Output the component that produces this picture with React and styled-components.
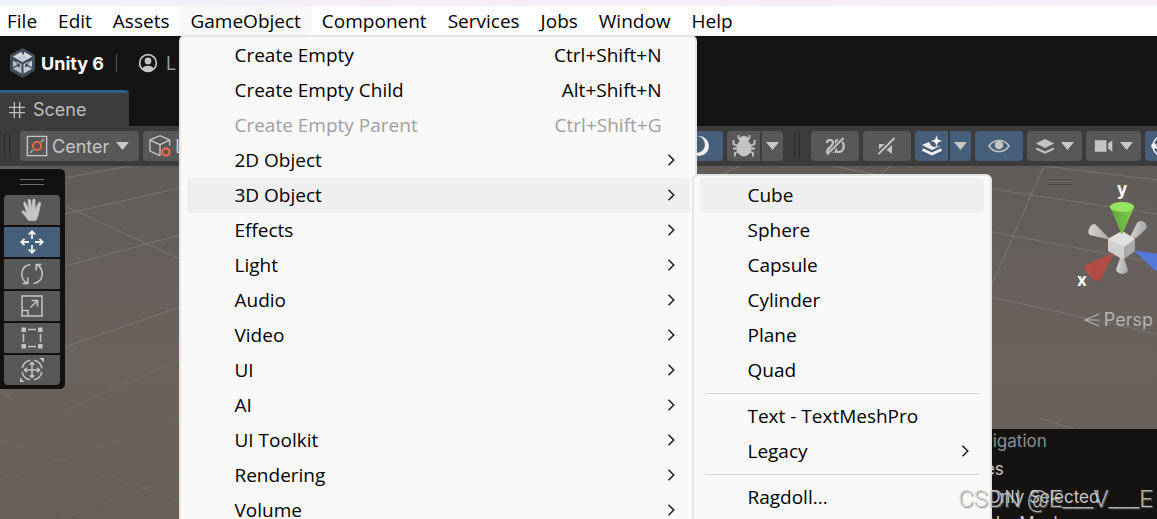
import styled, { createGlobalStyle } from "styled-components";

const GlobalStyle = createGlobalStyle`
  * {
    box-sizing: border-box;
  }
  body {
    margin: 0;
    overflow: hidden;
    background: #141414;
  }
  button {
    border: 0;
    padding: 0;
    font: inherit;
    color: inherit;
    background: none;
  }
`;

const Page = styled.div`
  position: relative;
  display: flex;
  flex-direction: column;
  height: 100vh;
  overflow: hidden;
  font-family: Inter, sans-serif;
  color: #c4c4c4;
`;

const TitleStrip = styled.div`
  flex: none;
  height: 6px;
  background: linear-gradient(90deg, #eef1fb, #f9ecf7 50%, #f6eef8);
`;

const MenuBar = styled.nav`
  display: flex;
  flex: none;
  height: 30px;
  margin-left: -3px;
  background: #fff;
  border-bottom: 1px solid #f0f0f0;
  font-family: "Open Sans", "Noto Sans", sans-serif;
  font-size: 19px;
  color: #000;
`;

const MenuSlot = styled.div`
  position: relative;
  display: flex;
`;

const MenuTitle = styled.button`
  padding: 0 11px 0 10px;
  white-space: nowrap;
  line-height: 28px;
  border-radius: 4px;
  background: ${(props) => (props.$open ? "#f9f9f9" : "transparent")};
`;

const Popup = styled.div`
  position: absolute;
  z-index: 10;
  top: ${(props) => (props.$sub ? "-4px" : "29px")};
  left: ${(props) => (props.$sub ? "505px" : "-1px")};
  width: ${(props) => (props.$sub ? "300px" : "518px")};
  padding: ${(props) => (props.$sub ? "2px 6px 10px" : "1px 5px 0 6px")};
  background: #f9f9f9;
  border: 2px solid #e5e5e5;
  border-radius: 6px;
`;

const PopupSlot = styled.div`
  position: relative;
`;

const PopupItem = styled.button`
  display: flex;
  align-items: center;
  width: 100%;
  height: 35px;
  padding: 0 13px 2px 47px;
  border-radius: 4px;
  white-space: nowrap;
  background: ${(props) => (props.$active ? "#efefef" : "transparent")};
  color: ${(props) => (props.disabled ? "#a0a0a0" : "#000")};
`;

const Shortcut = styled.span`
  margin-left: auto;
  padding-right: 16px;
`;

const Chevron = styled.svg`
  margin-left: auto;
`;

const Divider = styled.hr`
  height: 1px;
  margin: 5px 5px;
  border: 0;
  background: #d4d4d4;
`;

const Header = styled.header`
  display: flex;
  flex: none;
  align-items: center;
  height: 54px;
  padding: 0 9px;
  background: #141414;
`;

const Brand = styled.strong`
  margin-left: 5px;
  font-size: 18px;
  font-weight: 700;
  color: #fff;
`;

const Rule = styled.span`
  width: 1px;
  height: 18px;
  margin: 0 21px 0 12px;
  background: #555;
`;

const Account = styled.button`
  display: flex;
  align-items: center;
  gap: 8px;
  font-size: 18px;
  color: #999;

  svg {
    color: #c4c4c4;
  }
`;

const TabRow = styled.div`
  display: flex;
  flex: none;
  height: 36px;
  background: #141414;
`;

const Tab = styled.button`
  display: flex;
  align-items: center;
  gap: 8px;
  width: 129px;
  padding-left: 9px;
  border-top: 3px solid #2c5d87;
  border-radius: 0 4px 0 0;
  background: #3c3c3c;
  font-size: 18px;
  color: #bdbdbd;
`;

const Toolbar = styled.div`
  display: flex;
  flex: none;
  align-items: center;
  gap: 4px;
  height: 40px;
  padding: 0 0 0 4px;
  background: #3c3c3c;
`;

const Grip = styled.span`
  align-self: center;
  width: 6px;
  height: 24px;
  margin: ${(props) => (props.$wide ? "0 7px" : "0 6px 0 0")};
  border: solid #2a2a2a;
  border-width: 0 1px;
`;

const ToolGroup = styled.div`
  display: flex;
  gap: 4px;
  margin-left: auto;
  margin-right: -24px;
`;

const Split = styled.div`
  display: flex;
  gap: 2px;
`;

const ToolButton = styled.button`
  display: flex;
  flex: none;
  align-items: center;
  justify-content: center;
  gap: ${(props) => props.$gap || "6px"};
  width: ${(props) => props.$width}px;
  height: 30px;
  border-radius: ${(props) => props.$radius || "4px"};
  background: ${(props) => (props.$on ? "#46607c" : "#585858")};
  color: ${(props) => (props.$on ? "#f0f0f0" : "#c4c4c4")};
  font-size: 18px;
`;

const PivotButton = styled(ToolButton)`
  justify-content: flex-start;
  padding-left: 6px;

  svg:last-child {
    margin-left: 3px;
  }
`;

const Scene = styled.main`
  position: relative;
  flex: 1;
  padding-top: 3px;
  overflow: hidden;
  background: linear-gradient(#625c59, #69625d 55%, #665f5a);
`;

const Grid = styled.svg`
  position: absolute;
  inset: 0;
  width: 100%;
  height: 100%;
`;

const Palette = styled.div`
  position: relative;
  display: flex;
  flex-direction: column;
  gap: 2px;
  width: 65px;
  padding: 10px 5px 4px 4px;
  border-radius: 0 5px 5px 0;
  background: #121110;
`;

const PaletteGrip = styled.span`
  align-self: center;
  width: 24px;
  height: 6px;
  margin-bottom: 8px;
  border: solid #6c6c6c;
  border-width: 1px 0;
`;

const Gizmo = styled.svg`
  position: absolute;
  top: 0;
  right: 0;
`;

const Perspective = styled.button`
  position: absolute;
  top: 143px;
  right: 4px;
  display: flex;
  align-items: center;
  gap: 4px;
  font-size: 18px;
  color: #b5b2b0;
`;

const NavPanel = styled.section`
  position: absolute;
  top: 263px;
  right: 0;
  bottom: 0;
  width: 225px;
  background: #141311;
  font-size: 17px;
  white-space: nowrap;
`;

const NavTitle = styled.div`
  padding-left: 8px;
  line-height: 25px;
  color: #8f8f8f;
`;

const NavRow = styled.div`
  padding-left: ${(props) => (props.$child ? "6px" : "0")};
  line-height: ${(props) => (props.$child ? "26px" : "30px")};
  color: #c8c8c8;
`;

const Watermark = styled.div`
  position: absolute;
  z-index: 20;
  right: 4px;
  bottom: 6px;
  font-family: Roboto, sans-serif;
  font-size: 24px;
  font-weight: 300;
  line-height: 28px;
  color: #d0d0d0;
  opacity: 0.85;
  text-shadow: 1px 1px 1px #777;
`;

const MENUS = ["File", "Edit", "Assets", "GameObject", "Component", "Services", "Jobs", "Window", "Help"];

const GAME_OBJECT = [
  { label: "Create Empty", shortcut: "Ctrl+Shift+N" },
  { label: "Create Empty Child", shortcut: "Alt+Shift+N" },
  { label: "Create Empty Parent", shortcut: "Ctrl+Shift+G", disabled: true },
  { label: "2D Object" },
  { label: "3D Object", open: true },
  { label: "Effects" },
  { label: "Light" },
  { label: "Audio" },
  { label: "Video" },
  { label: "UI" },
  { label: "AI" },
  { label: "UI Toolkit" },
  { label: "Rendering" },
  { label: "Volume" },
];

const OBJECTS_3D = [
  { label: "Cube", active: true },
  { label: "Sphere" },
  { label: "Capsule" },
  { label: "Cylinder" },
  { label: "Plane" },
  { label: "Quad" },
  null,
  { label: "Text - TextMeshPro" },
  { label: "Legacy", more: true },
  null,
  { label: "Ragdoll..." },
];

const More = () => (
  <Chevron width="12" height="14" viewBox="0 0 12 14" fill="none" stroke="#222" strokeWidth="1.6">
    <path d="M3.5 1.8 8.7 7l-5.2 5.2" />
  </Chevron>
);

const Caret = ({ color = "#c8c8c8" }) => (
  <svg width="13" height="8" viewBox="0 0 13 8">
    <path d="M0 0h13L6.500 8z" fill={color} />
  </svg>
);

const Icon = ({ size = 24, children, ...rest }) => (
  <svg width={size} height={size} viewBox="0 0 24 24" fill="none" stroke="currentColor" strokeWidth="1.5" aria-hidden="true" {...rest}>
    {children}
  </svg>
);

const ObjectMenu = () => (
  <Popup $sub>
    {OBJECTS_3D.map((item, i) =>
      item ? (
        <PopupItem key={item.label} $active={item.active}>
          {item.label}
          {item.more && <More />}
        </PopupItem>
      ) : (
        <Divider key={i} />
      )
    )}
  </Popup>
);

const GameObjectMenu = () => (
  <Popup>
    {GAME_OBJECT.map((item) => (
      <PopupSlot key={item.label}>
        <PopupItem disabled={item.disabled} $active={item.open}>
          {item.label}
          {item.shortcut ? <Shortcut>{item.shortcut}</Shortcut> : <More />}
        </PopupItem>
        {item.open && <ObjectMenu />}
      </PopupSlot>
    ))}
  </Popup>
);

const UnityLogo = () => (
  <svg width="27" height="30" viewBox="0 0 27 30">
    <path d="M13.500 0 26 7v15.500L13.500 30 1 22.500V7z" fill="#424d59" />
    <path d="M12 4v4.500L8.200 10.700l5.300 3 5.300-3L15 8.500V4l8 4.600-4 2.300 0 0z" fill="#c3cbd6" />
    <path d="M12 4 4 8.600l9.500 5.500L23 8.600 15 4v4.400l3 1.800-4.500 2.600L9 10.200l3-1.800z" fill="#d5dbe4" />
    <path d="M4 9.600v9.600l3.800-2.200v-3.500l4.700 2.700v9.400L4 20.700l4.500-2.500 2.500 1.400v-3L4 12.600z" fill="#b4bdc9" />
    <path d="M23 9.600v9.600l-3.800-2.200v-3.500l-4.700 2.700v9.400l8.500-4.900-4.500-2.500-2.500 1.400v-3l7-4z" fill="#c3cbd6" />
  </svg>
);

const HandIcon = () => (
  <Icon>
    <path d="M8.500 22.500 2.300 14.600c-1.200-1.600.4-2.600 1.600-1.500l3 2.500L3.600 5.500c-.3-1.700 1.700-2 2.200-.5L9 11.500 8 2.500c0-1.700 2.200-1.700 2.500 0l1.300 8.600L12.700 2.200c.2-1.600 2.400-1.400 2.400.2L15.300 12l3-6.900c.7-1.500 2.700-.8 2.300.8-1 4-1.500 7.700-2.500 11.500-.5 2-1.200 3.500-2.400 5.100z" fill="currentColor" stroke="currentColor" strokeWidth="0.6" />
  </Icon>
);

const MoveIcon = () => (
  <Icon strokeWidth="1.800">
    <path d="M12 9V1.500M12 15v7.500M9 12H1.500M15 12h7.500M8.800 4.500 12 1.300l3.200 3.200M8.800 19.500l3.200 3.200 3.200-3.200M4.500 8.800 1.300 12l3.200 3.200M19.500 8.800l3.200 3.200-3.200 3.200" />
  </Icon>
);

const RotateIcon = () => (
  <Icon>
    <path d="M10.500 2.500C0 4-1 17 7.500 21.500M2.500 21.500h5.300v-6M13.500 21.500C24 20 25 7 16.500 2.500M21.500 2.500h-5.300v6" />
  </Icon>
);

const ScaleIcon = () => (
  <Icon>
    <path d="M2 2h20v20H2zM2 16.500h6V22M10.500 13.500 17 7M11.500 6.500h6v6" />
  </Icon>
);

const RectIcon = () => (
  <Icon>
    <path d="M8 3.500h8M8 20.500h8M3.500 8v8M20.500 8v8" />
    <path d="M1.500 1.500h4.500v4.500H1.500zM18 1.500h4.500v4.500H18zM1.500 18h4.500v4.500H1.500zM18 18h4.500v4.500H18z" fill="currentColor" stroke="none" />
  </Icon>
);

const TransformIcon = () => (
  <Icon>
    <path d="M12 4.500v15M4.500 12h15M9.700 6.800 12 4.500l2.300 2.300M9.700 17.200l2.300 2.300 2.300-2.300M6.800 9.700 4.500 12l2.300 2.300M17.200 9.700l2.300 2.300-2.300 2.300" />
    <circle cx="12" cy="12" r="10" strokeDasharray="11.700 4" strokeDashoffset="-2" />
    <path d="M19.500 0H24v4.500zM0 19.500V24h4.500z" fill="currentColor" stroke="none" />
  </Icon>
);

const PALETTE = [
  { name: "View", Glyph: HandIcon },
  { name: "Move", Glyph: MoveIcon, on: true },
  { name: "Rotate", Glyph: RotateIcon },
  { name: "Scale", Glyph: ScaleIcon },
  { name: "Rect", Glyph: RectIcon },
  { name: "Transform", Glyph: TransformIcon },
];

const paletteRadius = (i) => {
  if (i === 0) return "4px 4px 0 0";
  if (i === PALETTE.length - 1) return "0 0 4px 4px";
  return "1px";
};

const SceneToolbar = () => (
  <Toolbar>
    <Grip />
    <PivotButton $width={119} $gap="4px">
      <Icon size={22}>
        <path d="M1.500 1.500h21v21h-21zM4.500 19.500l3-3M16.500 7.500l3-3" />
        <circle cx="12" cy="12" r="4.500" stroke="#f26b43" strokeWidth="2" />
      </Icon>
      Center
      <Caret />
    </PivotButton>
    <PivotButton $width={119} $gap="4px">
      <Icon size={22}>
        <path d="M12 22.500 1 17.500v-12L12 .8l10.500 4.700v6M1 5.500l11 5 10.500-5M12 10.500v12" />
        <circle cx="18.500" cy="18.500" r="4" stroke="#f26b43" strokeWidth="2.400" />
      </Icon>
      Local
      <Caret />
    </PivotButton>
    <ToolGroup>
      <ToolButton $width={48} $on aria-label="Lighting">
        <Icon size={24}>
          <circle cx="12" cy="12" r="10" fill="#f0f0f0" stroke="none" />
          <circle cx="9.500" cy="10.500" r="8.500" fill="#46607c" stroke="none" />
        </Icon>
      </ToolButton>
      <Split>
        <ToolButton $width={33} $radius="4px 0 0 4px" aria-label="Debug">
          <Icon>
            <path d="M6.500 1v3L9 6M17.500 1v3L15 6M1.500 6v4L6 12M22.500 6v4L18 12M1 14.500h5M23 14.500h-5M3 22.500V19l4-2M21 22.500V19l-4-2" strokeWidth="1.800" />
            <ellipse cx="12" cy="14" rx="7.500" ry="8.500" fill="currentColor" stroke="none" />
            <ellipse cx="12" cy="5.500" rx="5" ry="3.500" fill="currentColor" stroke="none" />
          </Icon>
        </ToolButton>
        <ToolButton $width={21} $radius="0 4px 4px 0" aria-label="Debug options">
          <Caret />
        </ToolButton>
      </Split>
      <Grip $wide />
      <ToolButton $width={48} aria-label="2D view">
        <Icon>
          <path d="M4 9c0-4 6-4 6 0 0 3-6 5.500-6 9h7M13 6.500h2.500c7 0 7 11.500 0 11.500H13z" strokeWidth="2.200" />
          <path d="M5 21 20 4" strokeWidth="4" stroke="#585858" />
          <path d="M4 20.500 20.500 4" strokeWidth="1.800" />
        </Icon>
      </ToolButton>
      <ToolButton $width={48} aria-label="Scene audio">
        <Icon>
          <path d="M17 11v9l-5.500-4zM4 10h5.500L4 15.500z" fill="currentColor" stroke="none" />
          <path d="M3.500 20 19.500 4" strokeWidth="1.800" />
        </Icon>
      </ToolButton>
      <Split>
        <ToolButton $width={33} $radius="4px 0 0 4px" $on aria-label="Effects">
          <Icon>
            <path d="M2 11l7-3 2 3.500 3 1.500 7-1.500L12 16z" fill="currentColor" stroke="none" />
            <path d="M2.500 15.500 12 20l9.500-4.500" strokeWidth="2.500" />
            <path d="m16.500 1.500 1.500 4 4 1.500-4 1.500-1.500 4-1.500-4L11 7l4-1.500z" fill="currentColor" stroke="none" />
          </Icon>
        </ToolButton>
        <ToolButton $width={21} $radius="0 4px 4px 0" $on aria-label="Effects options">
          <Caret />
        </ToolButton>
      </Split>
      <ToolButton $width={48} $on aria-label="Visibility">
        <Icon>
          <path d="M2 12c5-7.500 15-7.500 20 0-5 7.500-15 7.500-20 0z" stroke="#c4c4c4" />
          <circle cx="12" cy="11" r="4.300" fill="#c4c4c4" stroke="none" />
        </Icon>
      </ToolButton>
      <ToolButton $width={55} aria-label="Overlays">
        <Icon size={20}>
          <path d="M12 3.500 23 9l-11 5.500L1 9z" fill="currentColor" stroke="none" />
          <path d="M1.500 15 12 20l10.500-5" strokeWidth="2.600" />
        </Icon>
        <Caret />
      </ToolButton>
      <ToolButton $width={55} aria-label="Camera">
        <Icon size={20}>
          <path d="M1 5h14v14H1zM17 9l5-4v14l-5-4z" fill="currentColor" stroke="none" />
        </Icon>
        <Caret />
      </ToolButton>
      <ToolButton $width={36} $on aria-label="Gizmos">
        <Icon size={24}>
          <circle cx="12" cy="12" r="10" />
          <path d="M2 12c5 4 15 4 20 0M12 2c-5 5-5 15 0 20" />
          <circle cx="3" cy="12" r="2" fill="currentColor" />
        </Icon>
      </ToolButton>
    </ToolGroup>
  </Toolbar>
);

const OrientationGizmo = () => (
  <Gizmo width="120" height="140" viewBox="1037 166 120 140">
    <defs>
      <linearGradient id="green"><stop offset="0" stopColor="#63a03e" /><stop offset="1" stopColor="#7fcf4c" /></linearGradient>
      <linearGradient id="red" x2="1" y2="1"><stop offset="0" stopColor="#bd5148" /><stop offset="1" stopColor="#a84740" /></linearGradient>
      <linearGradient id="grey"><stop offset="0" stopColor="#d5d5d5" /><stop offset="1" stopColor="#a3a3a3" /></linearGradient>
    </defs>
    <path d="M1048 179.500h24M1048 184.500h24" stroke="#4b4845" />
    <path d="m1111 240-21-5c-4-2 0-12 5-11z" fill="url(#grey)" />
    <path d="m1130 237 7-14c4-5 12 0 9 6l-10 9z" fill="url(#grey)" />
    <path d="m1122 252-6 18c2 5 11 5 12 0z" fill="url(#grey)" />
    <path d="m1108 239 14-8 13 8v12l-13 8-14-8z" fill="#cfcfcf" />
    <path d="m1108 239 14-8 13 8-11 8z" fill="#e0e0e0" />
    <path d="m1124 247 11-8v12l-11 8z" fill="#a9a9a9" />
    <path d="m1110 207 12 28 12-28z" fill="url(#green)" />
    <ellipse cx="1122" cy="207" rx="12" ry="5" fill="#97e362" />
    <path d="m1114 253-29 12c-2 5 8 17 15 16z" fill="url(#red)" />
    <path d="m1133 250 24 4v18z" fill="#5279dc" />
    <g fill="#fff" fontFamily="Inter, sans-serif" fontWeight="700" fontSize="17" textAnchor="middle">
      <text x="1122" y="195">y</text>
      <text x="1082" y="286">x</text>
    </g>
  </Gizmo>
);

export default function App() {
  return (
    <Page>
      <GlobalStyle />
      <TitleStrip />
      <MenuBar>
        {MENUS.map((name) => (
          <MenuSlot key={name}>
            <MenuTitle $open={name === "GameObject"}>{name}</MenuTitle>
            {name === "GameObject" && <GameObjectMenu />}
          </MenuSlot>
        ))}
      </MenuBar>
      <Header>
        <UnityLogo />
        <Brand>Unity 6</Brand>
        <Rule />
        <Account>
          <Icon size={20}>
            <circle cx="12" cy="12" r="10" strokeWidth="2" />
            <circle cx="12" cy="9.500" r="4" fill="currentColor" stroke="none" />
            <path d="M5 19c2-5 12-5 14 0-4 4-10 4-14 0z" fill="currentColor" stroke="none" />
          </Icon>
          L
        </Account>
      </Header>
      <TabRow>
        <Tab>
          <Icon size={16}>
            <path d="M8 0v24M16 0v24M0 8h24M0 16h24" strokeWidth="2" />
          </Icon>
          Scene
        </Tab>
      </TabRow>
      <SceneToolbar />
      <Scene>
        <Grid viewBox="0 166 1157 353" preserveAspectRatio="xMaxYMin slice" fill="none" stroke="#8b8682" strokeOpacity="0.6">
          <path d="M65 178 130 166M65 214 180 188M65 266 180 235M65 347 180 307M65 206 180 259M0 388 11 400" />
          <path d="M720 175l20-9M833 166l60 12M890 166l-10 10M1044 166 992 284M1044 166l113 14M992 189l165 25M992 232l165 31M992 297l165 37M1040 418l117 38" />
          <path d="M65 410 180 360M0 480 180 420M60 519 180 476M0 440 180 500" strokeOpacity="0.2" />
        </Grid>
        <Palette>
          <PaletteGrip />
          {PALETTE.map(({ name, Glyph, on }, i) => (
            <ToolButton key={name} $width={56} $radius={paletteRadius(i)} $on={on} aria-label={name}>
              <Glyph />
            </ToolButton>
          ))}
        </Palette>
        <OrientationGizmo />
        <Perspective>
          <svg width="16" height="14" viewBox="0 0 16 14" fill="none" stroke="currentColor" strokeWidth="1.200">
            <path d="M15 1 1 7l14 6M1 7h14" />
          </svg>
          Persp
        </Perspective>
        <NavPanel>
          <NavTitle>AI Navigation</NavTitle>
          <NavRow>Surfaces</NavRow>
          <NavRow $child>Show Only Selected</NavRow>
          <NavRow $child>Show NavMesh</NavRow>
        </NavPanel>
      </Scene>
      <Watermark>CSDN @E___V___E</Watermark>
    </Page>
  );
}
